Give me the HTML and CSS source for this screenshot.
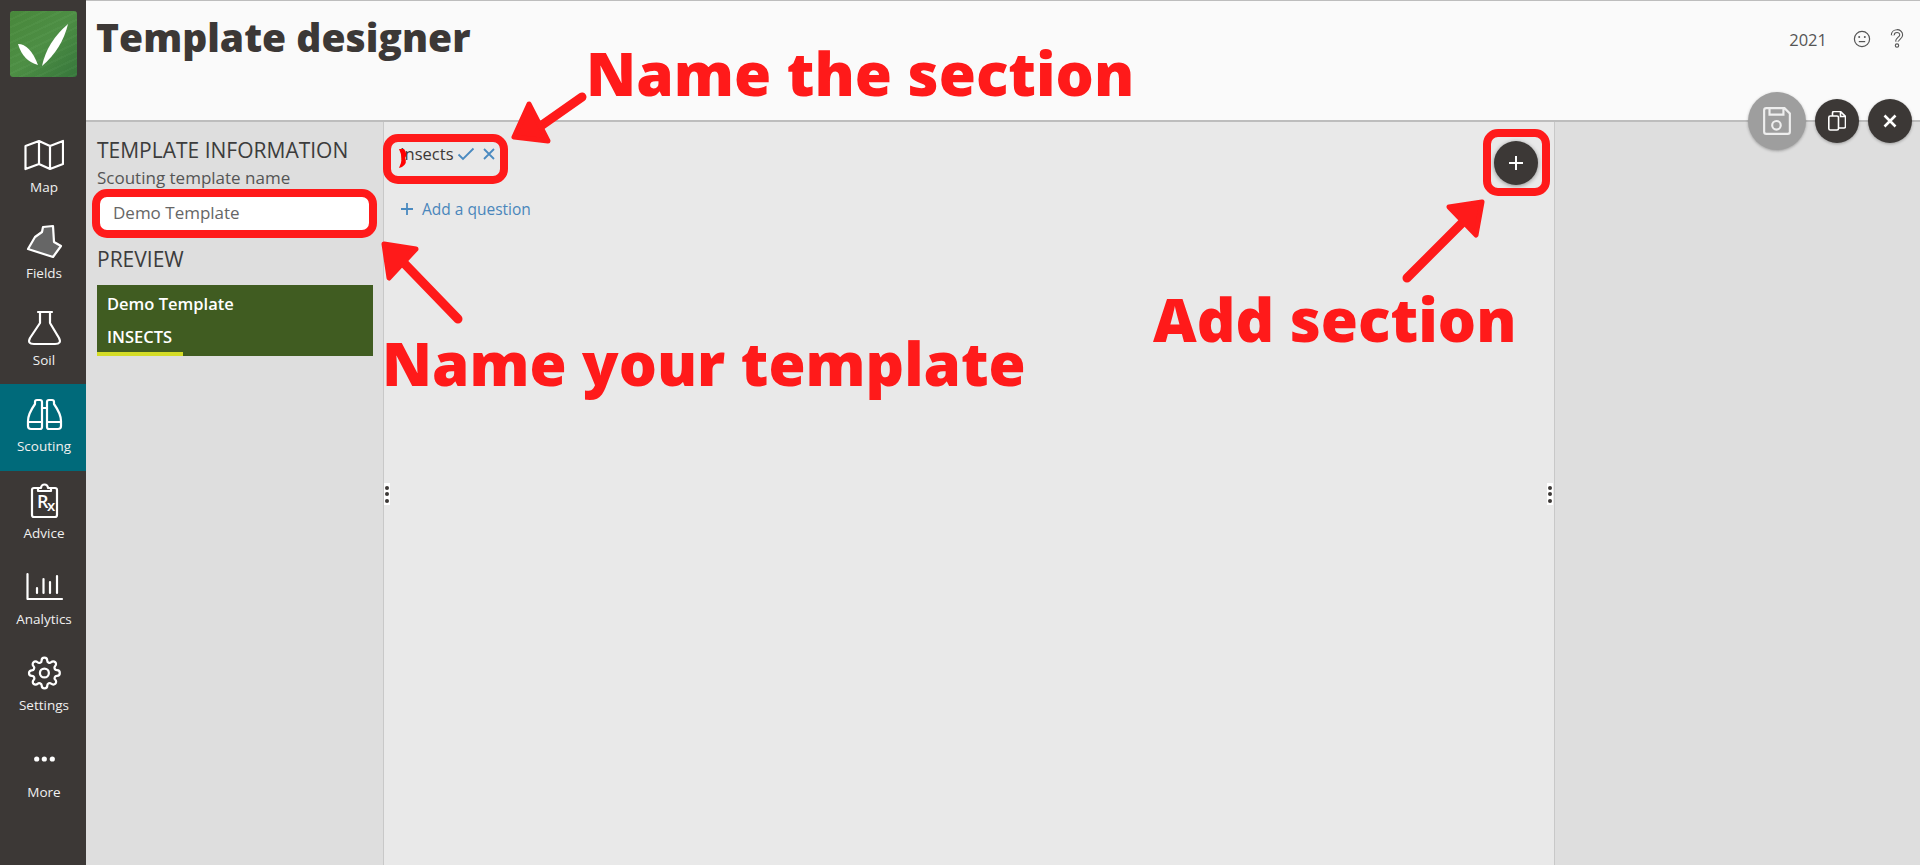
FILE: index.html
```html
<!DOCTYPE html>
<html>
<head>
	<title>Template designer</title>
	<link rel="stylesheet" href="styles.css">
</head>
<body>
	<nav class="sidebar">
		<div class="logo">
			<svg width="67" height="66" viewBox="0 0 67 66">
				<path d="M8 33 Q20 33 28 54 Q13 50 8 33 Z" fill="#fff"/>
				<path d="M58 13 Q52 38 32 55 Q37 31 58 13 Z" fill="#fff"/>
			</svg>
		</div>
		<a class="nav-item">
			<svg class="nav-icon" viewBox="0 0 40 40">
				<path d="M1.5 11 L15 6 L26 11 L39 6 V29 L26 34 L15 29 L1.5 34 Z M15 6 V29 M26 11 V34"/>
			</svg>
			<span>Map</span>
		</a>
		<a class="nav-item">
			<svg class="nav-icon" viewBox="0 0 40 40">
				<path class="field" d="M19 6 L29 5 L30 21 L37 25 L29 36 L4 28 L11 16 L18 11 Z"/>
			</svg>
			<span>Fields</span>
		</a>
		<a class="nav-item">
			<svg class="nav-icon" viewBox="0 0 40 40">
				<path d="M14 4 H28 M16 4 V15 L6 30 Q3 36 10 36 H31 Q38 36 35 30 L26 15 V4"/>
			</svg>
			<span>Soil</span>
		</a>
		<a class="nav-item active">
			<svg class="nav-icon" viewBox="0 0 40 40">
				<path d="M11 8 a2 2 0 0 1 2-2 h3 a2 2 0 0 1 2 2 V33 a2 2 0 0 1-2 2 H7 a3 3 0 0 1-3-3 V27 Q4 20 11 10 Z M4 28 H18"/>
				<path d="M30 8 a2 2 0 0 0-2-2 h-3 a2 2 0 0 0-2 2 V33 a2 2 0 0 0 2 2 H34 a3 3 0 0 0 3-3 V27 Q37 20 30 10 Z M37 28 H23"/>
				<path d="M18 14 H23"/>
			</svg>
			<span>Scouting</span>
		</a>
		<a class="nav-item">
			<svg class="nav-icon" viewBox="0 0 40 40">
				<path d="M14 7 H10 a2 2 0 0 0-2 2 V34 a2 2 0 0 0 2 2 H31 a2 2 0 0 0 2-2 V9 a2 2 0 0 0-2-2 H27 M14 7 H17 a3.5 3.5 0 0 1 7 0 H27 V10 H14 Z"/>
				<text class="rx" x="13" y="27">R<tspan dx="-1.5" dy="3" font-size="15">x</tspan></text>
			</svg>
			<span>Advice</span>
		</a>
		<a class="nav-item">
			<svg class="nav-icon" viewBox="0 0 40 40">
				<path d="M3.5 7 V32 H38 M13 26 V21 M19.5 26 V12 M26 26 V15 M33 26 V9"/>
			</svg>
			<span>Analytics</span>
		</a>
		<a class="nav-item">
			<svg class="nav-icon" viewBox="0 0 40 40">
				<g transform="translate(3.6 3.2) scale(1.4)" stroke-width="1.6">
					<circle cx="12" cy="12" r="3.2"/>
					<path d="M19.4 15a1.65 1.65 0 0 0 .33 1.82l.06.06a2 2 0 0 1 0 2.83 2 2 0 0 1-2.83 0l-.06-.06a1.65 1.65 0 0 0-1.82-.33 1.65 1.65 0 0 0-1 1.51V21a2 2 0 0 1-2 2 2 2 0 0 1-2-2v-.09A1.65 1.65 0 0 0 9 19.4a1.65 1.65 0 0 0-1.82.33l-.06.06a2 2 0 0 1-2.83 0 2 2 0 0 1 0-2.83l.06-.06a1.65 1.65 0 0 0 .33-1.82 1.65 1.65 0 0 0-1.51-1H3a2 2 0 0 1-2-2 2 2 0 0 1 2-2h.09A1.65 1.65 0 0 0 4.6 9a1.65 1.65 0 0 0-.33-1.82l-.06-.06a2 2 0 0 1 0-2.83 2 2 0 0 1 2.83 0l.06.06a1.65 1.65 0 0 0 1.82.33H9a1.65 1.65 0 0 0 1-1.51V3a2 2 0 0 1 2-2 2 2 0 0 1 2 2v.09a1.65 1.65 0 0 0 1 1.51 1.65 1.65 0 0 0 1.82-.33l.06-.06a2 2 0 0 1 2.83 0 2 2 0 0 1 0 2.83l-.06.06a1.65 1.65 0 0 0-.33 1.82V9a1.65 1.65 0 0 0 1.51 1H21a2 2 0 0 1 2 2 2 2 0 0 1-2 2h-.09a1.65 1.65 0 0 0-1.51 1z"/>
				</g>
			</svg>
			<span>Settings</span>
		</a>
		<a class="nav-item">
			<svg class="nav-icon" viewBox="0 0 40 40">
				<circle class="dot" cx="12.7" cy="19" r="2.6"/>
				<circle class="dot" cx="20.3" cy="19" r="2.6"/>
				<circle class="dot" cx="28.3" cy="19" r="2.6"/>
			</svg>
			<span>More</span>
		</a>
	</nav>

	<div class="main">
		<header class="topbar">
			<h1>Template designer</h1>
			<div class="topbar-right">
				<span class="year">2021</span>
				<svg class="top-icon smiley" width="18" height="18" viewBox="0 0 18 18">
					<circle cx="9" cy="9" r="7.6"/>
					<path d="M5.8 11.6 H12.2"/>
					<circle class="fill" cx="6.2" cy="7" r="1"/>
					<circle class="fill" cx="11.8" cy="7" r="1"/>
				</svg>
				<svg class="top-icon" width="14" height="20" viewBox="0 0 14 20">
					<path class="q-out" d="M2.8 6.2 C2.8 .8 11.2 .8 11.2 6 C11.2 9 7 9.5 7 12.5"/>
					<path class="q-in" d="M2.8 6.2 C2.8 .8 11.2 .8 11.2 6 C11.2 9 7 9.5 7 12.5"/>
					<circle class="q-dot" cx="7" cy="16.6" r="1.7"/>
				</svg>
			</div>
		</header>

		<div class="panels">
			<aside class="info">
				<h2>TEMPLATE INFORMATION</h2>
				<label class="field-label">Scouting template name</label>
				<input class="name-input" type="text" value="Demo Template">
				<h2 class="preview-title">PREVIEW</h2>
				<div class="preview">
					<div class="preview-name">Demo Template</div>
					<div class="preview-tab">INSECTS</div>
					<div class="preview-bar"></div>
				</div>
			</aside>

			<section class="editor">
				<div class="grip grip-left"><i></i><i></i><i></i></div>
				<div class="editor-top">
					<div class="section-name">
						<span>Insects</span>
						<svg class="blue-icon" width="18" height="14" viewBox="0 0 18 14"><path d="M1.5 7.5 L6 12 L16.5 1.5"/></svg>
						<svg class="blue-icon" width="12" height="12" viewBox="0 0 12 12"><path d="M1 1 L11 11 M11 1 L1 11"/></svg>
					</div>
					<button class="add-btn">
						<svg width="16" height="16" viewBox="0 0 16 16"><path d="M8 1 V15 M1 8 H15"/></svg>
					</button>
				</div>
				<div class="add-question">
					<svg class="blue-icon" width="14" height="14" viewBox="0 0 14 14"><path d="M7 1 V13 M1 7 H13"/></svg>
					<span>Add a question</span>
				</div>
				<div class="grip grip-right"><i></i><i></i><i></i></div>
			</section>

			<div class="rest"></div>
		</div>
	</div>

	<div class="fabs">
		<button class="fab fab-save">
			<svg width="30" height="30" viewBox="0 0 28 28">
				<path d="M2 4 a2 2 0 0 1 2-2 H21 L26 7 V24 a2 2 0 0 1-2 2 H4 a2 2 0 0 1-2-2 Z M7 2 V8 H20 V2"/>
				<circle cx="13.5" cy="18" r="4"/>
			</svg>
		</button>
		<button class="fab">
			<svg width="18" height="20" viewBox="0 0 18 20">
				<path d="M4.5 5 V2 a1.5 1.5 0 0 1 1.5-1.5 H12.5 L17.5 5.5 V15.5 a1.5 1.5 0 0 1-1.5 1.5 H10.5 M12.5 .5 V5.5 H17.5"/>
				<rect x=".8" y="5" width="9.7" height="14" rx="1.5"/>
			</svg>
		</button>
		<button class="fab">
			<svg width="14" height="14" viewBox="0 0 14 14"><path class="thick" d="M1.5 1.5 L12.5 12.5 M12.5 1.5 L1.5 12.5"/></svg>
		</button>
	</div>

	<!-- red callouts drawn on top of the screenshot -->
	<div class="notes">
		<svg class="arrows" width="1920" height="865" viewBox="0 0 1920 865">
			<path class="shaft" d="M582 97 L535 130"/>
			<path class="head" d="M529 104 L514 137 L548 141 Z"/>
			<path class="shaft" d="M458 319 L400 259"/>
			<path class="head" d="M384 244 L416 249 L389 278 Z"/>
			<path class="shaft" d="M1407 278 L1466 219"/>
			<path class="head" d="M1482 202 L1449 207 L1476 235 Z"/>
			<path class="blob" d="M399 149 H404 Q408 154 405 158 Q408 163 402 167 L399 168 Q404 159 399 149 Z"/>
		</svg>
		<div class="box box-name"></div>
		<div class="box box-section"></div>
		<div class="box box-add"></div>
		<span class="note note-section">Name the section</span>
		<span class="note note-template">Name your template</span>
		<span class="note note-add">Add section</span>
	</div>
</body>
</html>
```

FILE: styles.css
```css
html, body {
	margin: 0;
	height: 100%;
	overflow: hidden;
}
body {
	display: flex;
	font-family: "Open Sans", sans-serif;
	color: #3c3836;
	background: #dedede;
}
svg {
	display: block;
}

/* left nav */
.sidebar {
	width: 86px;
	flex: none;
	background: #3c3836;
	display: flex;
	flex-direction: column;
}
.logo {
	width: 67px;
	height: 66px;
	margin: 11px 0 48px 10px;
	border-radius: 3px;
	background:
		repeating-linear-gradient(155deg, rgba(255,255,255,.02) 0 2px, rgba(0,0,0,.025) 2px 7px),
		linear-gradient(135deg, #4a8a3c, #4f9146 50%, #37793c);
}
.logo svg {
	overflow: visible;
}
.nav-item {
	height: 86.4px;
	box-sizing: border-box;
	padding: 10px 0 0 2px;
	display: flex;
	flex-direction: column;
	align-items: center;
	font-size: 13.5px;
	line-height: 18px;
	color: #f0f0f0;
}
.nav-item span {
	margin-top: 3px;
}
.nav-item.active {
	background: #006a7a;
}
.nav-icon {
	width: 40px;
	height: 40px;
	fill: none;
	stroke: #fff;
	stroke-width: 2.2;
	stroke-linejoin: round;
	stroke-linecap: round;
}
.nav-icon .field {
	fill: #666;
}
.nav-icon .dot {
	fill: #fff;
	stroke: none;
}
.nav-icon .rx {
	fill: #fff;
	stroke: none;
	font-family: "Open Sans", sans-serif;
	font-weight: 600;
	font-size: 18px;
}

/* header */
.main {
	flex: 1;
	display: flex;
	flex-direction: column;
	min-width: 0;
}
.topbar {
	height: 122px;
	flex: none;
	box-sizing: border-box;
	background: #fafafa;
	border-top: 1px solid #bdbdbd;
	border-bottom: 2px solid #bdbdbd;
	padding: 0 16px 0 10px;
	display: flex;
	justify-content: space-between;
}
.topbar h1 {
	margin: 11px 0 0;
	font-size: 39px;
	line-height: 50px;
	font-weight: 800;
}
.topbar-right {
	display: flex;
	align-items: center;
	height: 24px;
	margin-top: 26px;
	color: #555;
	font-size: 16.5px;
}
.year {
	margin-right: 26px;
}
.top-icon {
	fill: #555;
	stroke: none;
}
.smiley {
	margin-right: 19px;
	fill: none;
	stroke: #555;
	stroke-width: 1.2;
}
.smiley .fill {
	fill: #555;
	stroke: none;
}
.q-out {
	fill: none;
	stroke: #555;
	stroke-width: 4;
}
.q-in {
	fill: none;
	stroke: #fafafa;
	stroke-width: 1.8;
}
.q-dot {
	fill: none;
	stroke: #555;
	stroke-width: 1.1;
}

/* panels */
.panels {
	flex: 1;
	display: flex;
	min-height: 0;
}
.info {
	width: 298px;
	flex: none;
	box-sizing: border-box;
	background: #dedede;
	border-right: 1px solid #c8c8c8;
	padding: 15px 10px 0 11px;
}
.info h2 {
	margin: 0;
	font-size: 21px;
	line-height: 26px;
	font-weight: 400;
	color: #3c3c3c;
}
.field-label {
	display: block;
	margin-top: 4px;
	font-size: 17px;
	line-height: 22px;
	color: #555;
}
.name-input {
	display: block;
	width: 100%;
	height: 37px;
	box-sizing: border-box;
	margin-top: 5px;
	padding: 0 0 0 16px;
	border: 0;
	border-radius: 4px;
	background: #fff;
	font-family: "Open Sans", sans-serif;
	font-size: 17px;
	color: #666;
}
.info .preview-title {
	margin-top: 15px;
}
.preview {
	position: relative;
	height: 71px;
	margin-top: 13px;
	padding: 6px 10px 0;
	box-sizing: border-box;
	background: #405c21;
	color: #fff;
	font-size: 16.5px;
	font-weight: 600;
}
.preview-name {
	line-height: 26px;
}
.preview-tab {
	margin-top: 7px;
	line-height: 26px;
}
.preview-bar {
	position: absolute;
	left: 0;
	bottom: 0;
	width: 86px;
	height: 4px;
	background: #d4dc26;
}
.editor {
	position: relative;
	width: 1171px;
	flex: none;
	box-sizing: border-box;
	background: #e9e9e9;
	border-right: 1px solid #c8c8c8;
	padding: 19px 16px 0 16px;
}
.editor-top {
	display: flex;
	justify-content: space-between;
	align-items: flex-start;
}
.section-name {
	display: flex;
	align-items: center;
	margin-top: 1px;
	font-size: 16.5px;
	line-height: 24px;
}
.section-name span {
	margin-right: 3px;
}
.section-name svg + svg {
	margin-left: 8px;
}
.blue-icon {
	fill: none;
	stroke: #4a8ac0;
	stroke-width: 1.8;
}
.add-btn {
	width: 44px;
	height: 44px;
	padding: 0;
	border: 0;
	border-radius: 50%;
	background: #3c3836;
	box-shadow: 0 1px 4px rgba(0,0,0,.4);
	display: flex;
	align-items: center;
	justify-content: center;
	fill: none;
	stroke: #fff;
	stroke-width: 2;
}
.add-question {
	display: flex;
	align-items: center;
	gap: 8px;
	margin-top: 12px;
	font-size: 15.5px;
	line-height: 24px;
	color: #4a86bb;
}
.grip {
	position: absolute;
	top: 361px;
	width: 6px;
	height: 22px;
	background: #fff;
	display: flex;
	flex-direction: column;
	align-items: center;
	justify-content: space-evenly;
}
.grip i {
	width: 4px;
	height: 4px;
	border-radius: 50%;
	background: #3c3836;
}
.grip-left {
	left: 0;
}
.grip-right {
	right: 1px;
}
.rest {
	flex: 1;
	background: #dedede;
}

/* round buttons over the header edge */
.fabs {
	position: absolute;
	top: 92px;
	right: 8px;
	height: 58px;
	display: flex;
	align-items: center;
	gap: 9px;
}
.fab {
	width: 44px;
	height: 44px;
	padding: 0;
	border: 0;
	border-radius: 50%;
	background: #3c3836;
	box-shadow: 0 1px 3px rgba(0,0,0,.3);
	display: flex;
	align-items: center;
	justify-content: center;
	fill: none;
	stroke: #fff;
	stroke-width: 1.6;
}
.fab-save {
	width: 58px;
	height: 58px;
	background: #9e9e9e;
	stroke: #eee;
	stroke-width: 2;
}
.fab .thick {
	stroke-width: 2.6;
}

/* callouts */
.notes {
	position: absolute;
	left: 0;
	top: 0;
	width: 1920px;
	height: 865px;
	pointer-events: none;
}
.arrows {
	position: absolute;
	left: 0;
	top: 0;
}
.shaft {
	fill: none;
	stroke: #ff1a1a;
	stroke-width: 9;
	stroke-linecap: round;
}
.head {
	fill: #ff1a1a;
	stroke: #ff1a1a;
	stroke-width: 5;
	stroke-linejoin: round;
}
.blob {
	fill: #ff0000;
}
.box {
	position: absolute;
	box-sizing: border-box;
	border: 8px solid #ff1a1a;
	border-radius: 15px;
}
.box-name {
	left: 92px;
	top: 189px;
	width: 285px;
	height: 49px;
}
.box-section {
	left: 383px;
	top: 134px;
	width: 125px;
	height: 50px;
}
.box-add {
	left: 1483px;
	top: 129px;
	width: 67px;
	height: 67px;
}
.note {
	position: absolute;
	font-size: 60.2px;
	line-height: 82px;
	font-weight: 800;
	white-space: nowrap;
	color: #ff1a1a;
}
.note-section {
	left: 586px;
	top: 32px;
}
.note-template {
	left: 382px;
	top: 322px;
	font-size: 60px;
}
.note-add {
	left: 1153px;
	top: 278px;
}
```
